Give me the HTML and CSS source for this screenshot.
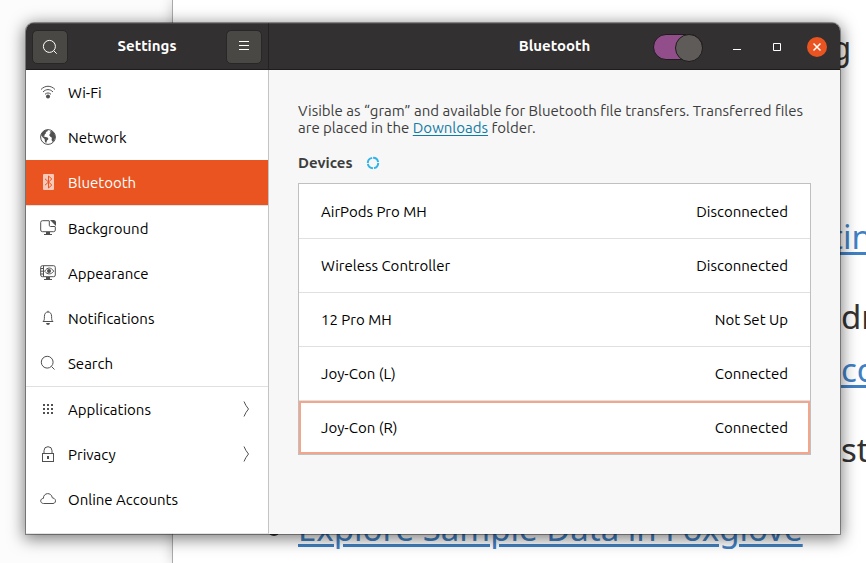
FILE: index.html
```html
<!DOCTYPE html>
<html lang="en">
<head>
<meta charset="utf-8">
<title>Settings</title>
<link rel="stylesheet" href="styles.css">
</head>
<body>
<div class="desktop">
  <div class="page">
    <div class="page-edge">
      <p class="tucked">g</p>
      <p class="lead tucked"><a href="#">tin</a></p>
      <p class="gap">dr</p>
      <p><a href="#">co</a></p>
      <p class="gap">st</p>
    </div>
    <ul class="page-list"><li><a href="#">Explore Sample Data in Foxglove</a></li></ul>
  </div>

  <main class="window">
    <header class="bar bar-side">
      <button class="tool" type="button" aria-label="Search">
        <svg viewBox="0 0 16 16" width="16" height="16"><circle cx="7.4" cy="7.4" r="6"/><path d="M11.7 11.7l3 3"/></svg>
      </button>
      <h1>Settings</h1>
      <button class="tool" type="button" aria-label="Menu">
        <svg viewBox="0 0 16 16" width="16" height="16"><path d="M3 2.500h10M3 6.500h10M3 10.500h10"/></svg>
      </button>
    </header>
    <header class="bar bar-main">
      <h2>Bluetooth</h2>
      <div class="controls">
        <input class="switch" type="checkbox" role="switch" aria-label="Bluetooth" checked>
        <button class="win" type="button" aria-label="Minimize"><svg viewBox="0 0 20 20" width="20" height="20"><path d="M6 12.500h8"/></svg></button>
        <button class="win" type="button" aria-label="Maximize"><svg viewBox="0 0 20 20" width="20" height="20"><path d="M6.500 6.500h7v7h-7z"/></svg></button>
        <button class="win close" type="button" aria-label="Close"><svg viewBox="0 0 20 20" width="20" height="20"><path d="M6.500 6.500l7 7M13.500 6.500l-7 7"/></svg></button>
      </div>
    </header>

    <nav class="side">
      <a href="#"><svg viewBox="0 0 16 16"><path d="M1 5.500C5 1.200 11 1.200 15 5.500M3 8c3-3.200 7-3.200 10 0M5 10.300c2-1.800 4-1.800 6 0"/><circle class="solid" cx="8" cy="12.500" r="2"/></svg><span>Wi-Fi</span></a>
      <a href="#"><svg viewBox="0 0 16 16"><circle cx="8" cy="8" r="7.400"/><path class="solid" d="M1 6l1.500-3L5 1.200l3-.4-.7 1.700-1.800.6.8 1-1.500 1.100-.3 1.600L3.200 7l1.600.8 2.800.6.9 1.600-1.500 1.500-.8 2.500-1.200-1-.4-3-1.800-1.500zM9.600 3.500l1-1.400 2.300.4 2 3.200.3 3-1.300 3-1.700 1-.6-2 .3-2-1.500-.9-1.200-1.500.8-1.800 1.400-.8z"/></svg><span>Network</span></a>
      <a href="#" class="active divided" aria-current="page"><svg viewBox="0 0 16 16"><rect class="badge" x="3" y="0" width="11" height="16" rx="1"/><path class="rune" d="M5 4.800l6.800 6.200-3.300 3V2l3.300 3L5 11.200"/></svg><span>Bluetooth</span></a>
      <a href="#"><svg viewBox="0 0 16 16"><path d="M9 .7H2.500Q.7.700.7 2.500v7.500q0 1.700 1.800 1.700h11q1.800 0 1.800-1.700V7M9.300.7v4.600q0 1.200 1.200 1.200h4.800"/><path class="solid" d="M10 0h3.500Q16 0 16 2.500V6zM6 12h4v2h2v1H4v-1h2z"/></svg><span>Background</span></a>
      <a href="#"><svg viewBox="0 0 16 16"><rect x=".7" y=".7" width="14.600" height="11" rx="1.700"/><path d="M3.500 1v10.500M.7 3.500h2.800M.7 6.200h2.800M.7 9h2.800M4.700 6.200c2.500-4.200 6.500-4.200 9 0-2.500 3.600-6.500 3.600-9 0z"/><circle class="solid" cx="9" cy="6" r="2"/><path class="solid" d="M6 12h4v2h2v1H4v-1h2z"/></svg><span>Appearance</span></a>
      <a href="#"><svg viewBox="0 0 16 16"><path d="M3 11.500c1.300-1 1.400-2 1.400-5C4.400 3.700 5.700 2 8 2s3.600 1.700 3.600 4.500c0 3 .1 4 1.400 5zM8 2V.8"/><path class="solid" d="M6 13h4q-.4 2-2 2t-2-2z"/></svg><span>Notifications</span></a>
      <a href="#" class="divided"><svg viewBox="0 0 16 16"><circle cx="7.200" cy="7.200" r="5.900"/><path d="M11.500 11.500l3 3"/></svg><span>Search</span></a>
      <a href="#"><svg viewBox="0 0 16 16"><path class="solid" d="M3 3h2v2H3zM7 3h2v2H7zM11 3h2v2h-2zM3 7h2v2H3zM7 7h2v2H7zM11 7h2v2h-2zM3 11h2v2H3zM7 11h2v2H7zM11 11h2v2h-2z"/></svg><span>Applications</span><svg class="chevron" viewBox="0 0 16 16"><path d="M6 .5q1.500 4 4.500 7.500Q7.500 11.500 6 15.500"/></svg></a>
      <a href="#"><svg viewBox="0 0 16 16"><rect x="2.500" y="7.500" width="11" height="8"/><path d="M4 7.500V4.700a4 4 0 0 1 8 0v2.800"/><path class="solid" d="M7 10h2v3H7z"/></svg><span>Privacy</span><svg class="chevron" viewBox="0 0 16 16"><path d="M6 .5q1.500 4 4.500 7.500Q7.500 11.500 6 15.500"/></svg></a>
      <a href="#"><svg viewBox="0 0 16 16"><path d="M3.500 12.500C-.2 12.300-.2 7.500 3.400 7.400 3.200 1.500 11.500.8 12.300 6.800c4 .3 4.300 5.500.7 5.700z"/></svg><span>Online Accounts</span></a>
    </nav>

    <section class="panel">
      <p class="intro">Visible as “gram” and available for Bluetooth file transfers. Transferred files are placed in the <a href="#">Downloads</a> folder.</p>
      <div class="heading">
        <h3>Devices</h3>
        <svg class="spinner" viewBox="0 0 14 14" width="14" height="14"><circle cx="7" cy="7" r="5.200"/></svg>
      </div>
      <ul class="devices">
        <li><button type="button"><span>AirPods Pro MH</span><span>Disconnected</span></button></li>
        <li><button type="button"><span>Wireless Controller</span><span>Disconnected</span></button></li>
        <li><button type="button"><span>12 Pro MH</span><span>Not Set Up</span></button></li>
        <li><button type="button"><span>Joy-Con (L)</span><span>Connected</span></button></li>
        <li><button type="button" class="focused"><span>Joy-Con (R)</span><span>Connected</span></button></li>
      </ul>
    </section>
  </main>
</div>
</body>
</html>
```
FILE: styles.css
```css
* { box-sizing: border-box; }

body {
  margin: 0;
  font: 15px/17px Ubuntu, "Noto Sans", sans-serif;
  color: #000;
}

h1, h2, h3, p, ul { margin: 0; padding: 0; font-size: inherit; }
ul { list-style: none; }
button { font: inherit; color: inherit; border: 0; padding: 0; background: none; }
svg { flex: none; fill: none; stroke: currentColor; }

.desktop {
  position: relative;
  height: 100vh;
  overflow: hidden;
  background: #fcfcfc;
}

/* document behind the window */
.page {
  display: flex;
  flex-direction: column;
  justify-content: space-between;
  height: 100%;
  margin-left: 172px;
  border-left: 1px solid #aaa;
  background: #fff;
  box-shadow: 0 0 12px rgba(0, 0, 0, .2);
  color: #333;
  font: 33px/53px "Noto Sans", sans-serif;
}
.page a { color: #4080c4; text-decoration-thickness: 3px; text-underline-offset: 3px; }
.page-edge {
  align-self: flex-end;
  width: 36px;
  padding: 21px 0 0 11px;
}
.page-edge .tucked { margin-left: -10px; }
.page-edge .lead { margin-top: 136px; }
.page-edge .gap { margin-top: 27px; }
.page-list { padding: 0 0 8px 125px; list-style: disc; }

/* settings window */
.window {
  position: absolute;
  inset: 23px 26px 29px;
  display: grid;
  grid-template-columns: 243px 1fr;
  grid-template-rows: 47px 1fr;
  overflow: hidden;
  border-radius: 8px 8px 0 0;
  background: #f7f7f7;
  box-shadow: 0 0 0 1px rgba(0, 0, 0, .35), 0 3px 16px 2px rgba(0, 0, 0, .5);
}

.bar {
  display: grid;
  align-items: center;
  background: #333031;
  border-top: 1px solid #4b4849;
  border-bottom: 1px solid #1e1c1d;
  color: #fff;
  text-align: center;
}
.bar h1, .bar h2 { padding-bottom: 2px; }
.bar-side {
  grid-template-columns: 36px 1fr 36px;
  padding: 0 6px;
  border-right: 1px solid #232122;
}
.bar-main { grid-template-columns: 1fr auto 1fr; padding-right: 9px; padding-left: 9px; }
.bar-main h2 { grid-column: 2; }

.tool {
  display: grid;
  place-items: center;
  height: 34px;
  border: 1px solid #282626;
  border-radius: 5px;
  background: #494845;
}
.controls { display: flex; align-items: center; justify-content: flex-end; gap: 12px; }
.switch {
  appearance: none;
  width: 50px;
  height: 26px;
  margin: 0 8px 0 0;
  border: 1px solid #1e1c1d;
  border-radius: 13px;
  background: #924d8b;
}
.switch::before {
  content: "";
  display: block;
  width: 26px;
  height: 26px;
  margin: -1px -1px 0 auto;
  border: 1px solid #1e1c1d;
  border-radius: 50%;
  background: #5f5b58;
}
.win { display: grid; place-items: center; width: 28px; height: 28px; }
.close svg { border-radius: 50%; background: #e95420; stroke-width: 1.5; }

.side {
  overflow: hidden;
  border-right: 1px solid #c4c4c4;
  border-bottom: 1px solid #e4e4e4;
  background: #fff;
}
.side a {
  display: flex;
  align-items: center;
  gap: 12px;
  height: 45px;
  padding: 0 14px 1px;
  color: #000;
  text-decoration: none;
}
.side span { line-height: 19px; }
.side svg { width: 16px; height: 16px; color: #505050; }
.side .solid { fill: currentColor; stroke: none; }
.side .divided { height: 46px; border-bottom: 1px solid #e0e0e0; }
.side .active { background: #e95420; background-clip: padding-box; color: #fff; }
.side .badge { fill: #f8c8b8; stroke: none; }
.side .rune { stroke: #e95420; }
.side .chevron { margin-left: auto; }

.panel { padding: 32px 29px; }
.intro { color: #3d3d3d; }
.intro a { color: #107ba5; text-underline-offset: 2px; }
.heading {
  display: flex;
  align-items: center;
  gap: 13px;
  margin: 18px 0 12px;
  color: #3d3d3d;
}
.spinner { color: #35b4e8; stroke-width: 2; stroke-dasharray: 7 1; }

.devices { border: 1px solid #c0c0c0; background: #fff; }
.devices li + li { border-top: 1px solid #e0e0e0; }
.devices button {
  display: flex;
  align-items: center;
  justify-content: space-between;
  width: 100%;
  height: 53px;
  padding: 0 22px;
}
.devices li:first-child button { height: 54px; }
.devices .focused { box-shadow: inset 0 0 0 2px #f2a78d; }
```
